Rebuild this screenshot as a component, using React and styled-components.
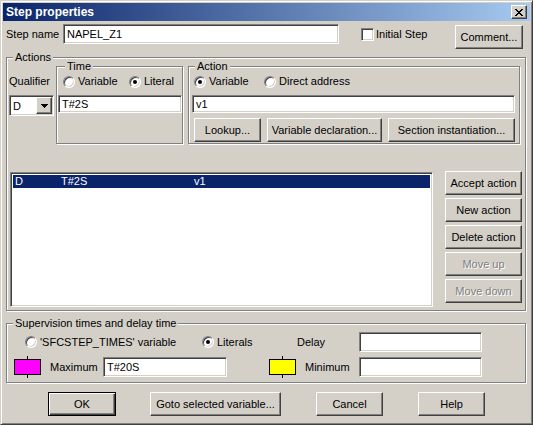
import React from "react";
import styled, { createGlobalStyle, css } from "styled-components";

const GlobalStyle = createGlobalStyle`
  html, body { margin: 0; padding: 0; background: #d4d0c8; }
  body {
    font-family: "Liberation Sans", Arial, sans-serif;
    font-size: 11px;
    color: #000;
  }
  *, *::before, *::after { box-sizing: border-box; }
`;

const raised = css`
  border: 1px solid;
  border-color: #fff #404040 #404040 #fff;
  box-shadow: inset -1px -1px 0 #808080, inset 1px 1px 0 #d4d0c8;
`;

const sunken = css`
  border: 1px solid;
  border-color: #808080 #fff #fff #808080;
  box-shadow: inset 1px 1px 0 #404040, inset -1px -1px 0 #d4d0c8;
`;

const Window = styled.div`
  width: 533px;
  height: 425px;
  background: #d4d0c8;
  border: 1px solid;
  border-color: #d4d0c8 #404040 #404040 #d4d0c8;
  box-shadow: inset 1px 1px 0 #fff, inset -1px -1px 0 #808080;
  padding: 2px;
  display: flex;
  flex-direction: column;
`;

const TitleBar = styled.div`
  flex: none;
  height: 18px;
  background: linear-gradient(to right, #0a246a, #a6caf0);
  color: #fff;
  font-weight: bold;
  font-size: 12px;
  display: flex;
  align-items: center;
  justify-content: space-between;
  padding: 0 3px;
`;

const CloseButton = styled.div`
  ${raised};
  width: 16px;
  height: 14px;
  background: #d4d0c8;
  display: flex;
  align-items: center;
  justify-content: center;
`;

const Body = styled.div`
  display: flex;
  flex-direction: column;
  padding: 0 4px 0 3px;
`;

const Row = styled.div`
  display: flex;
  align-items: ${(p) => p.$align || "center"};
  margin-top: ${(p) => p.$mt || 0}px;
  height: ${(p) => (p.$h ? `${p.$h}px` : "auto")};
`;

const Label = styled.span`
  flex: none;
  width: ${(p) => (p.$w ? `${p.$w}px` : "auto")};
  margin-left: ${(p) => p.$ml || 0}px;
  line-height: 13px;
  white-space: nowrap;
`;

const Field = styled.div`
  ${sunken};
  flex: none;
  background: #fff;
  width: ${(p) => p.$w}px;
  height: ${(p) => p.$h || 20}px;
  margin-left: ${(p) => p.$ml || 0}px;
  margin-top: ${(p) => p.$mt || 0}px;
  padding-left: 3px;
  display: flex;
  align-items: center;
  white-space: nowrap;
`;

const CheckLabel = styled.label`
  display: flex;
  align-items: center;
  margin-left: ${(p) => p.$ml || 0}px;
  margin-top: ${(p) => p.$mt || 0}px;
  gap: 2px;
  line-height: 13px;
`;

const CheckBox = styled.span`
  ${sunken};
  width: 13px;
  height: 13px;
  background: #fff;
`;

const Button = styled.div`
  ${raised};
  flex: none;
  background: #d4d0c8;
  width: ${(p) => p.$w}px;
  height: ${(p) => p.$h || 24}px;
  margin-left: ${(p) => (p.$ml === "auto" ? "auto" : `${p.$ml || 0}px`)};
  margin-right: ${(p) => p.$mr || 0}px;
  margin-top: ${(p) => p.$mt || 0}px;
  display: flex;
  align-items: center;
  justify-content: center;
  white-space: nowrap;
  color: ${(p) => (p.$disabled ? "#808080" : "#000")};
  text-shadow: ${(p) => (p.$disabled ? "1px 1px 0 #fff" : "none")};
  ${(p) =>
    p.$default &&
    css`
      border: 1px solid #000;
      box-shadow: inset 1px 1px 0 #fff, inset -1px -1px 0 #404040,
        inset -2px -2px 0 #808080, inset 2px 2px 0 #d4d0c8;
    `}
`;

const GroupBox = styled.fieldset`
  margin: ${(p) => p.$mt || 0}px 0 0 ${(p) => p.$ml || 0}px;
  min-width: 0;
  flex: none;
  width: ${(p) => (p.$w ? `${p.$w}px` : "auto")};
  height: ${(p) => (p.$h ? `${p.$h}px` : "auto")};
  padding: 0 ${(p) => p.$pr || 0}px ${(p) => p.$pb || 0}px ${(p) => p.$pl || 0}px;
  border: 1px solid #808080;
  box-shadow: inset 1px 1px 0 #fff, 1px 1px 0 #fff;
`;

const Legend = styled.legend`
  padding: 0 2px;
  margin-left: ${(p) => p.$ml || 0}px;
  line-height: 13px;
  background: #d4d0c8;
`;

const TopArea = styled.div`
  display: flex;
  align-items: flex-start;
  margin-top: -4px;
  height: 84px;
`;

const QualColumn = styled.div`
  width: 45px;
  display: flex;
  flex-direction: column;
  padding-top: 15px;
`;

const Combo = styled.div`
  ${sunken};
  background: #fff;
  width: 45px;
  height: 21px;
  margin-top: 7px;
  padding: 1px;
  display: flex;
  align-items: stretch;
`;

const ComboText = styled.span`
  flex: 1;
  padding-left: 2px;
  display: flex;
  align-items: center;
`;

const ComboArrow = styled.span`
  ${raised};
  width: 16px;
  background: #d4d0c8;
  display: flex;
  align-items: center;
  justify-content: center;
`;

const RadioRow = styled.div`
  display: flex;
  align-items: center;
  height: 13px;
  margin-top: 2px;
  margin-left: ${(p) => p.$ml || 0}px;
`;

const RadioItem = styled.label`
  flex: none;
  display: flex;
  align-items: center;
  gap: 3px;
  width: ${(p) => (p.$w ? `${p.$w}px` : "auto")};
  margin-left: ${(p) => p.$ml || 0}px;
  line-height: 13px;
  white-space: nowrap;
`;

const RadioCircle = styled.span`
  flex: none;
  width: 12px;
  height: 12px;
  border-radius: 50%;
  border: 1px solid;
  border-color: #808080 #fff #fff #808080;
  box-shadow: inset 1px 1px 0 #404040, inset -1px -1px 0 #d4d0c8;
  background: #fff;
  display: flex;
  align-items: center;
  justify-content: center;
`;

const RadioDot = styled.span`
  width: 4px;
  height: 4px;
  border-radius: 50%;
  background: #000;
`;

const ListRow = styled.div`
  display: flex;
  align-items: flex-start;
  margin-top: 27px;
`;

const ListBox = styled.div`
  ${sunken};
  background: #fff;
  width: 423px;
  height: 135px;
  margin: 1px 0 0 1px;
  padding: 2px;
`;

const ListItem = styled.div`
  display: grid;
  grid-template-columns: 46px 133px 1fr;
  height: 13px;
  line-height: 13px;
  padding-left: 2px;
  background: ${(p) => (p.$selected ? "#0a246a" : "transparent")};
  color: ${(p) => (p.$selected ? "#fff" : "#000")};
`;

const ButtonColumn = styled.div`
  display: flex;
  flex-direction: column;
  gap: 3px;
  margin-left: 12px;
`;

const ButtonBar = styled.div`
  display: flex;
  align-items: center;
  margin-top: 9px;
`;

const Radio = ({ checked, w, ml, children }) => (
  <RadioItem $w={w} $ml={ml}>
    <RadioCircle>{checked && <RadioDot />}</RadioCircle>
    {children}
  </RadioItem>
);

const Swatch = ({ color, ml }) => (
  <svg
    width="27"
    height="22"
    viewBox="0 0 27 22"
    shapeRendering="crispEdges"
    style={{ flex: "none", marginLeft: ml }}
  >
    <rect x="13" y="0" width="1" height="4" fill="#000" />
    <rect x="0.5" y="3.5" width="26" height="15" fill={color} stroke="#000" />
    <rect x="13" y="18" width="1" height="4" fill="#000" />
  </svg>
);

const CloseGlyph = () => (
  <svg width="8" height="7" viewBox="0 0 8 7" shapeRendering="crispEdges">
    <path
      fill="#000"
      d="M0 0h2v1H0zM6 0h2v1H6zM1 1h2v1H1zM5 1h2v1H5zM2 2h4v1H2zM3 3h2v1H3zM2 4h4v1H2zM1 5h2v1H1zM5 5h2v1H5zM0 6h2v1H0zM6 6h2v1H6z"
    />
  </svg>
);

const ArrowGlyph = () => (
  <svg width="7" height="4" viewBox="0 0 7 4" shapeRendering="crispEdges">
    <path fill="#000" d="M0 0h7v1H0zM1 1h5v1H1zM2 2h3v1H2zM3 3h1v1H3z" />
  </svg>
);

export default function App() {
  return (
    <>
      <GlobalStyle />
      <Window>
        <TitleBar>
          <span>Step properties</span>
          <CloseButton>
            <CloseGlyph />
          </CloseButton>
        </TitleBar>
        <Body>
          <Row $align="flex-start" $mt={3} $h={26}>
            <Label $w={57} style={{ lineHeight: "20px" }}>
              Step name
            </Label>
            <Field $w={276} $h={20}>NAPEL_Z1</Field>
            <CheckLabel $ml={22} $mt={4}>
              <CheckBox />
              Initial Step
            </CheckLabel>
            <Button $w={68} $ml="auto" $mr={3} $mt={1}>
              Comment...
            </Button>
          </Row>

          <GroupBox $mt={1} $pl={2} $pb={3}>
            <Legend $ml={4}>Actions</Legend>
            <TopArea>
              <QualColumn>
                <Label>Qualifier</Label>
                <Combo>
                  <ComboText>D</ComboText>
                  <ComboArrow>
                    <ArrowGlyph />
                  </ComboArrow>
                </Combo>
              </QualColumn>
              <GroupBox $ml={2} $w={127} $h={84} $pl={1}>
                <Legend $ml={7}>Time</Legend>
                <RadioRow $ml={5}>
                  <Radio w={66}>Variable</Radio>
                  <Radio checked>Literal</Radio>
                </RadioRow>
                <Field $w={124} $h={18} $mt={7}>T#2S</Field>
              </GroupBox>
              <GroupBox $ml={5} $w={332} $h={84} $pl={3}>
                <Legend $ml={3}>Action</Legend>
                <RadioRow $ml={2}>
                  <Radio checked w={70}>Variable</Radio>
                  <Radio>Direct address</Radio>
                </RadioRow>
                <Field $w={323} $h={18} $mt={7}>v1</Field>
                <Row $mt={5}>
                  <Button $w={67} $ml={2}>Lookup...</Button>
                  <Button $w={115} $ml={6}>Variable declaration...</Button>
                  <Button $w={127} $ml={6}>Section instantiation...</Button>
                </Row>
              </GroupBox>
            </TopArea>
            <ListRow>
              <ListBox>
                <ListItem $selected>
                  <span>D</span>
                  <span>T#2S</span>
                  <span>v1</span>
                </ListItem>
              </ListBox>
              <ButtonColumn>
                <Button $w={77} $h={24}>Accept action</Button>
                <Button $w={77} $h={24}>New action</Button>
                <Button $w={77} $h={24}>Delete action</Button>
                <Button $w={77} $h={24} $disabled>Move up</Button>
                <Button $w={77} $h={24} $disabled>Move down</Button>
              </ButtonColumn>
            </ListRow>
          </GroupBox>

          <GroupBox $mt={6} $pl={2} $pb={5}>
            <Legend $ml={4}>Supervision times and delay time</Legend>
            <Row $mt={2} $h={20}>
              <Radio w={177} ml={16}>'SFCSTEP_TIMES' variable</Radio>
              <Radio checked w={95}>Literals</Radio>
              <Label $w={62}>Delay</Label>
              <Field $w={123} $h={20} />
            </Row>
            <Row $mt={5} $h={20}>
              <Swatch color="#ff00ff" ml={5} />
              <Label $w={53} $ml={9}>Maximum</Label>
              <Field $w={124} $h={20}>T#20S</Field>
              <Swatch color="#ffff00" ml={42} />
              <Label $w={54} $ml={9}>Minimum</Label>
              <Field $w={123} $h={20} />
            </Row>
          </GroupBox>

          <ButtonBar>
            <Button $w={68} $ml={42} $default>OK</Button>
            <Button $w={131} $ml={34}>Goto selected variable...</Button>
            <Button $w={67} $ml={35}>Cancel</Button>
            <Button $w={67} $ml={35}>Help</Button>
          </ButtonBar>
        </Body>
      </Window>
    </>
  );
}
